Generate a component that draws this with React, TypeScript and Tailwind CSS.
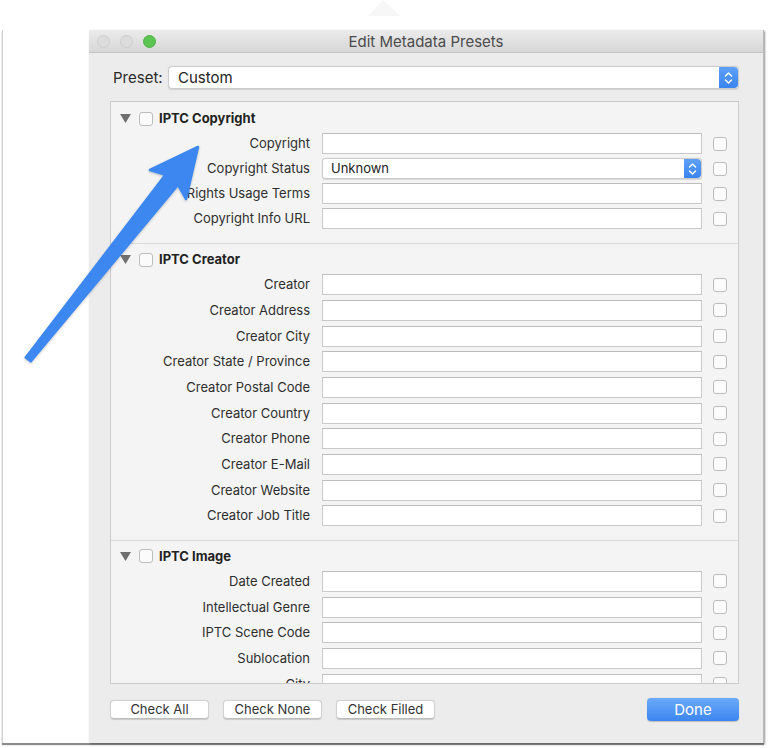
import React from "react";

const FONT = { fontFamily: 'Inter, "Noto Sans", "Liberation Sans", sans-serif' };

function Checkbox() {
  return <div className="w-[14px] h-[14px] rounded-[3px] border border-[#bdbdbd] bg-[#fbfbfb] shrink-0" />;
}

function Stepper({ w, h }: { w: string; h: string }) {
  return (
    <div className={`${w} ${h} shrink-0 rounded-r-[4px] bg-gradient-to-b from-[#5ea1f8] to-[#3a84f0] flex items-center justify-center`}>
      <svg width="9" height="14" viewBox="0 0 9 14" fill="none" stroke="white" strokeWidth="1.4" strokeLinecap="round" strokeLinejoin="round">
        <path d="M1.5 5 L4.5 2 L7.5 5" />
        <path d="M1.5 9 L4.5 12 L7.5 9" />
      </svg>
    </div>
  );
}

function Row({ label, h, select }: { label: string; h: string; select?: string }) {
  return (
    <div className={`flex items-center ${h}`}>
      <div className="w-[199px] shrink-0 text-right text-[13px] text-[#2e2e2e] whitespace-nowrap leading-none">{label}</div>
      <div className="w-[12px] shrink-0" />
      {select ? (
        <div className="w-[380px] h-[21px] shrink-0 flex bg-white border border-[#cbcbcb] rounded-[3px] shadow-[0_0.5px_1px_rgba(0,0,0,0.12)]">
          <div className="flex-1 flex items-center pl-[8px] text-[13px] text-[#222] leading-none">{select}</div>
          <Stepper w="w-[17px]" h="h-full" />
        </div>
      ) : (
        <div className="w-[380px] h-[21px] shrink-0 bg-white border border-[#c9c9c9] border-t-[#bdbdbd]" />
      )}
      <div className="w-[11px] shrink-0" />
      <Checkbox />
    </div>
  );
}

function Header({ title }: { title: string }) {
  return (
    <div className="flex items-center h-[25px] pl-[9px]">
      <svg width="11" height="9" viewBox="0 0 11 9" className="shrink-0">
        <path d="M0 0 L11 0 L5.5 9 Z" fill="#6f6f6f" />
      </svg>
      <div className="w-[8px]" />
      <Checkbox />
      <div className="w-[6px]" />
      <div className="text-[13px] font-bold text-[#222] leading-none">{title}</div>
    </div>
  );
}

const creator = [
  "Creator",
  "Creator Address",
  "Creator City",
  "Creator State / Province",
  "Creator Postal Code",
  "Creator Country",
  "Creator Phone",
  "Creator E-Mail",
  "Creator Website",
  "Creator Job Title",
];
const image = ["Date Created", "Intellectual Genre", "IPTC Scene Code", "Sublocation", "City"];

function Btn({ children }: { children: React.ReactNode }) {
  return (
    <div className="w-[99px] h-[19px] bg-white rounded-[4px] border border-[#d2d2d2] border-b-[#bcbcbc] shadow-[0_0.5px_1px_rgba(0,0,0,0.15)] flex items-center justify-center text-[13px] text-[#333] leading-none">
      {children}
    </div>
  );
}

export default function App() {
  return (
    <div className="w-[768px] h-[748px] bg-white relative overflow-hidden" style={FONT}>
      {/* faint shape at top */}
      <svg className="absolute left-[365px] top-0" width="38" height="16" viewBox="0 0 38 16">
        <path d="M3 16 L18 0 L35 16 Z" fill="#f7f7f7" />
      </svg>
      <div className="pt-[30px] pl-[2px]">
        <div className="h-[713px] w-[762px] border-l border-[#d0d0d0] shadow-[0_2px_1px_rgba(0,0,0,0.45)] flex pl-[86px]">
          <div className="w-[675px] h-full flex flex-col bg-[#ececec] shadow-[1px_1px_2px_rgba(0,0,0,0.35)] border-r border-[#b9b9b9]">
            {/* title bar */}
            <div className="h-[23px] shrink-0 grid grid-cols-[1fr_auto_1fr] items-center bg-gradient-to-b from-[#ebebeb] to-[#d7d7d7] border-b border-[#c3c3c3]">
              <div className="flex items-center pl-[8px] gap-[10px]">
                <div className="w-[13px] h-[13px] rounded-full bg-[#dcdcdc] border border-[#cdcdcd]" />
                <div className="w-[13px] h-[13px] rounded-full bg-[#dcdcdc] border border-[#cdcdcd]" />
                <div className="w-[13px] h-[13px] rounded-full bg-[#5cc451] border border-[#4fb244]" />
              </div>
              <div className="text-[15px] text-[#4b4b4b] leading-none">Edit Metadata Presets</div>
              <div />
            </div>
            {/* body */}
            <div className="flex-1 flex flex-col pl-[21px] pr-[24px]">
              <div className="mt-[13px] h-[23px] flex items-center">
                <div className="w-[58px] pl-[3px] text-[15px] text-[#2a2a2a] leading-none">Preset:</div>
                <div className="flex-1 h-[23px] flex bg-white rounded-[4px] border border-[#cccccc] shadow-[0_0.5px_1px_rgba(0,0,0,0.12)]">
                  <div className="flex-1 flex items-center pl-[9px] text-[15px] text-[#222] leading-none">Custom</div>
                  <Stepper w="w-[19px]" h="h-full" />
                </div>
              </div>
              <div className="mt-[12px] h-[583px] border border-[#cbcbcb] bg-[#f4f4f4] overflow-hidden">
                <div className="pt-[4px] pb-[12px] border-b border-[#dadada]">
                  <Header title="IPTC Copyright" />
                  <Row label="Copyright" h="h-[25px]" />
                  <Row label="Copyright Status" h="h-[25px]" select="Unknown" />
                  <Row label="Rights Usage Terms" h="h-[25px]" />
                  <Row label="Copyright Info URL" h="h-[25px]" />
                </div>
                <div className="pt-[3px] pb-[11px] border-b border-[#dadada]">
                  <Header title="IPTC Creator" />
                  {creator.map((c) => (
                    <Row key={c} label={c} h="h-[25.67px]" />
                  ))}
                </div>
                <div className="pt-[3px]">
                  <Header title="IPTC Image" />
                  {image.map((c) => (
                    <Row key={c} label={c} h="h-[25.67px]" />
                  ))}
                </div>
              </div>
              <div className="mt-[13px] h-[24px] flex items-center">
                <div className="flex gap-[14px]">
                  <Btn>Check All</Btn>
                  <Btn>Check None</Btn>
                  <Btn>Check Filled</Btn>
                </div>
                <div className="flex-1" />
                <div className="w-[92px] h-[23px] rounded-[4px] bg-gradient-to-b from-[#6aa9f8] to-[#3c86f0] flex items-center justify-center text-[15px] text-white leading-none shadow-[0_0.5px_1px_rgba(0,0,0,0.2)]">
                  Done
                </div>
              </div>
            </div>
          </div>
        </div>
      </div>
      {/* annotation arrow */}
      <svg className="absolute left-0 top-0 pointer-events-none" width="768" height="748" viewBox="0 0 768 748">
        <defs>
          <filter id="sh" x="-20%" y="-20%" width="140%" height="140%">
            <feDropShadow dx="0" dy="1" stdDeviation="1.2" floodColor="#000" floodOpacity="0.25" />
          </filter>
        </defs>
        <polygon
          points="198,147 186,199 178.1,184.8 30.8,361.3 25.8,357.6 165.5,174.8 150,170"
          fill="#3d87f0"
          stroke="#3d87f0"
          strokeWidth="2.5"
          strokeLinejoin="round"
          filter="url(#sh)"
        />
      </svg>
    </div>
  );
}
